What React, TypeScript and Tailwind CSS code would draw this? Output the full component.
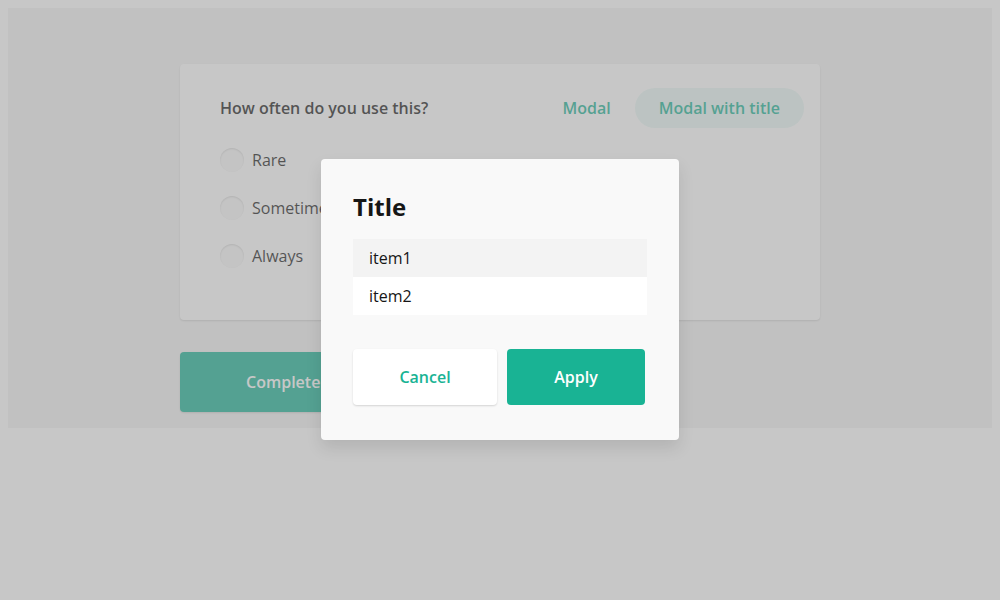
import React from 'react';

const options = ['Rare', 'Sometimes', 'Always'];
const items = ['item1', 'item2'];

export default function App() {
  return (
    <div className="relative min-h-[600px] bg-white p-2 font-['Open_Sans',sans-serif] text-[#161616]">
      <div className="h-[420px] bg-[#f3f3f3] pt-14">
        <div className="mx-auto w-[640px]">
          <div className="h-[256px] rounded-[4px] bg-white pt-6 shadow-[0_1px_2px_rgba(0,0,0,0.15)]">
            <div className="flex h-10 items-center justify-between pl-10 pr-4">
              <div className="text-base font-semibold leading-6">How often do you use this?</div>
              <div className="flex">
                <button className="h-10 rounded-full px-6 text-base font-semibold text-[#19b394]">Modal</button>
                <button className="h-10 rounded-full bg-[rgba(25,179,148,0.1)] px-6 text-base font-semibold text-[#19b394]">Modal with title</button>
              </div>
            </div>
            <div className="mt-5 flex flex-col gap-6 pl-10">
              {options.map((o) => (
                <label key={o} className="flex h-6 items-center gap-2">
                  <span className="h-6 w-6 rounded-full bg-[#f9f9f9] shadow-[inset_0_1px_2px_rgba(0,0,0,0.15)]" />
                  <span className="text-base leading-6">{o}</span>
                </label>
              ))}
            </div>
          </div>
          <button className="mt-8 h-[60px] rounded-[4px] bg-[#19b394] px-[66px] text-base font-semibold text-white shadow-[0_1px_2px_rgba(0,0,0,0.15)]">Complete</button>
        </div>
      </div>

      <div className="absolute inset-0 flex items-start justify-center bg-[rgba(144,144,144,0.5)] pt-[159px]">
        <div className="w-[358px] rounded-[4px] bg-[#f9f9f9] px-8 pt-8 pb-[35px] shadow-[0_8px_16px_rgba(0,0,0,0.1)]">
          <div className="text-2xl font-bold leading-8">Title</div>
          <div className="mt-4">
            {items.map((it, i) => (
              <div key={it} className={`flex h-[38px] items-center px-4 text-base ${i === 0 ? 'bg-[#f3f3f3]' : 'bg-white'}`}>{it}</div>
            ))}
          </div>
          <div className="mt-[34px] flex gap-[10px]">
            <button className="h-14 w-[144px] rounded-[4px] bg-white text-base font-semibold text-[#19b394] shadow-[0_1px_2px_rgba(0,0,0,0.15)]">Cancel</button>
            <button className="h-14 w-[138px] rounded-[4px] bg-[#19b394] text-base font-semibold text-white">Apply</button>
          </div>
        </div>
      </div>
    </div>
  );
}
